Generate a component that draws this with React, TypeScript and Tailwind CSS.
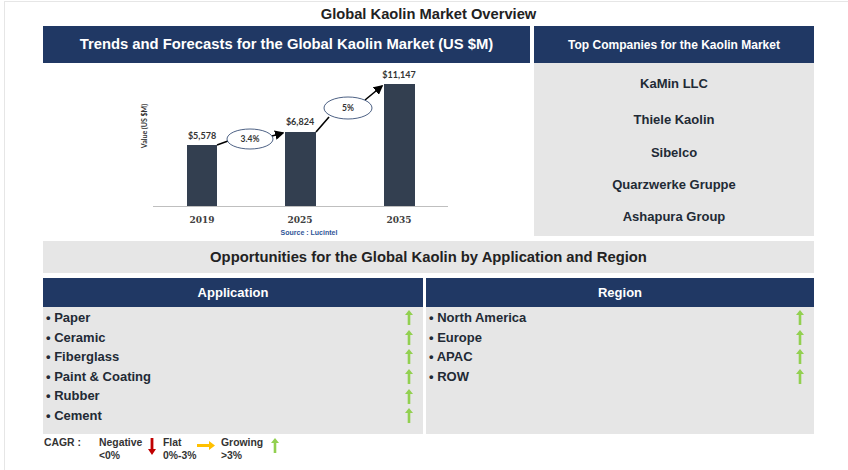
import React from "react";

const apps = ["Paper", "Ceramic", "Fiberglass", "Paint & Coating", "Rubber", "Cement"];
const regions = ["North America", "Europe", "APAC", "ROW"];
const companies = [
  { name: "KaMin LLC", h: "h-[37px]" },
  { name: "Thiele Kaolin", h: "h-[35px]" },
  { name: "Sibelco", h: "h-[32px]" },
  { name: "Quarzwerke Gruppe", h: "h-[32px]" },
  { name: "Ashapura Group", h: "h-[32px]" },
];

const UpArrow = ({ color = "#92d050" }: { color?: string }) => (
  <svg width="8" height="15" viewBox="0 0 8 15">
    <path d="M4 0 L8 5 L5.3 5 L5.3 15 L2.7 15 L2.7 5 L0 5 Z" fill={color} />
  </svg>
);

const DownArrow = () => (
  <svg width="8" height="17" viewBox="0 0 8 17">
    <path d="M2.6 0 L5.4 0 L5.4 11 L8 11 L4 17 L0 11 L2.6 11 Z" fill="#c00000" />
  </svg>
);

const RightArrow = () => (
  <svg width="18" height="9" viewBox="0 0 18 9">
    <path d="M0 3 L12 3 L12 0 L18 4.5 L12 9 L12 6 L0 6 Z" fill="#ffc000" />
  </svg>
);

const Chart = () => (
  <svg width="487" height="173" viewBox="0 0 487 173" className="block overflow-visible">
    <defs>
      <marker id="ah" markerWidth="6" markerHeight="6" refX="5" refY="3" orient="auto">
        <path d="M0 0 L6 3 L0 6 Z" fill="#000" />
      </marker>
    </defs>
    <text
      x="104"
      y="63"
      transform="rotate(-90 104 63)"
      textAnchor="middle"
      fontSize="7"
      fontWeight="700"
      fill="#333"
      fontFamily="Lato, sans-serif"
    >
      Value (US $M)
    </text>
    <line x1="110" y1="143.5" x2="405" y2="143.5" stroke="#bfbfbf" strokeWidth="1" />
    <rect x="144" y="82" width="30" height="61" fill="#333f50" />
    <rect x="242" y="69" width="31" height="74" fill="#333f50" />
    <rect x="341" y="21" width="31" height="122" fill="#333f50" />
    <g fontFamily="Lato, sans-serif" fontWeight="700" fontSize="9" fill="#333" textAnchor="middle">
      <text x="159" y="76">$5,578</text>
      <text x="257" y="62">$6,824</text>
      <text x="356" y="15">$11,147</text>
    </g>
    <g fontFamily="'DejaVu Serif', serif" fontWeight="700" fontSize="9" fill="#404040" textAnchor="middle">
      <text x="159" y="160">2019</text>
      <text x="257" y="160">2025</text>
      <text x="356" y="160">2035</text>
    </g>
    <text x="266" y="172" textAnchor="middle" fontSize="7" fontWeight="700" fill="#2f5597" fontFamily="'Liberation Sans', sans-serif">
      Source : Lucintel
    </text>
    <line x1="174" y1="82" x2="185" y2="78" stroke="#000" strokeWidth="1.6" />
    <line x1="229" y1="73" x2="240" y2="70" stroke="#000" strokeWidth="1.6" markerEnd="url(#ah)" />
    <line x1="273" y1="69" x2="286" y2="54" stroke="#000" strokeWidth="1.6" />
    <line x1="322" y1="37" x2="339" y2="23" stroke="#000" strokeWidth="1.6" markerEnd="url(#ah)" />
    <ellipse cx="207" cy="76" rx="23" ry="10" fill="#fff" stroke="#1f3864" strokeWidth="0.8" />
    <ellipse cx="305" cy="45" rx="24" ry="11" fill="#fff" stroke="#1f3864" strokeWidth="0.8" />
    <g fontFamily="Lato, sans-serif" fontWeight="700" fontSize="8.5" fill="#333" textAnchor="middle">
      <text x="207" y="79">3.4%</text>
      <text x="305" y="48">5%</text>
    </g>
  </svg>
);

const ListPanel = ({ items, width }: { items: string[]; width: string }) => (
  <div className={`${width} h-[127px] bg-[#e6e6e6] pt-[1px] pl-[3px] pr-[10px]`}>
    {items.map((item) => (
      <div key={item} className="flex h-[19.6px] items-center justify-between">
        <span className="text-[13px] font-bold text-[#222a35]">• {item}</span>
        <UpArrow />
      </div>
    ))}
  </div>
);

export default function App() {
  return (
    <div className="w-[848px] h-[470px] bg-white overflow-hidden" style={{ fontFamily: "'Liberation Sans', Arial, sans-serif" }}>
      <div className="ml-1 mt-px h-full border-l border-t border-[#e6e6e6] pl-[38px]">
        <div className="w-[771px]">
          {/* Title */}
          <div className="h-[24px] flex items-center justify-center text-[14.7px] font-bold text-[#222]">
            Global Kaolin Market Overview
          </div>

          {/* Top row */}
          <div className="flex gap-1">
            <div className="w-[487px]">
              <div className="h-[37px] bg-[#203864] flex items-center justify-center text-white text-[14.8px] font-bold">
                Trends and Forecasts for the Global Kaolin Market (US $M)
              </div>
              <div className="h-[173px] bg-white">
                <Chart />
              </div>
            </div>
            <div className="w-[280px]">
              <div className="h-[37px] bg-[#203864] flex items-center justify-center text-white text-[12px] font-bold">
                Top Companies for the Kaolin Market
              </div>
              <div className="h-[173px] bg-[#e6e6e6] flex flex-col pt-[2px]">
                {companies.map((c) => (
                  <div key={c.name} className={`${c.h} flex items-center justify-center text-[13px] font-bold text-[#222a35]`}>
                    {c.name}
                  </div>
                ))}
              </div>
            </div>
          </div>

          {/* Opportunities */}
          <div className="mt-[5px] h-[32px] bg-[#e6e6e6] flex items-center justify-center text-[14.8px] font-bold text-[#222]">
            Opportunities for the Global Kaolin by Application and Region
          </div>

          <div className="mt-[5px] flex gap-[3px]">
            <div>
              <div className="w-[380px] h-[29px] bg-[#203864] flex items-center justify-center text-white text-[13px] font-bold">
                Application
              </div>
              <ListPanel items={apps} width="w-[380px]" />
            </div>
            <div>
              <div className="w-[388px] h-[29px] bg-[#203864] flex items-center justify-center text-white text-[13px] font-bold">
                Region
              </div>
              <ListPanel items={regions} width="w-[388px]" />
            </div>
          </div>

          {/* Legend */}
          <div className="mt-[2px] flex items-start text-[10.4px] font-bold text-[#333] leading-[13px]">
            <span className="ml-[1px] w-[55px]">CAGR :</span>
            <div className="w-[42px]">
              <div>Negative</div>
              <div>&lt;0%</div>
            </div>
            <div className="ml-[7px] mt-[2px]">
              <DownArrow />
            </div>
            <div className="ml-[7px] w-[30px]">
              <div>Flat</div>
              <div>0%-3%</div>
            </div>
            <div className="ml-[4px] mt-[5px]">
              <RightArrow />
            </div>
            <div className="ml-[6px] w-[42px]">
              <div>Growing</div>
              <div>&gt;3%</div>
            </div>
            <div className="ml-[8px] mt-[2px]">
              <UpArrow />
            </div>
          </div>
        </div>
      </div>
    </div>
  );
}
